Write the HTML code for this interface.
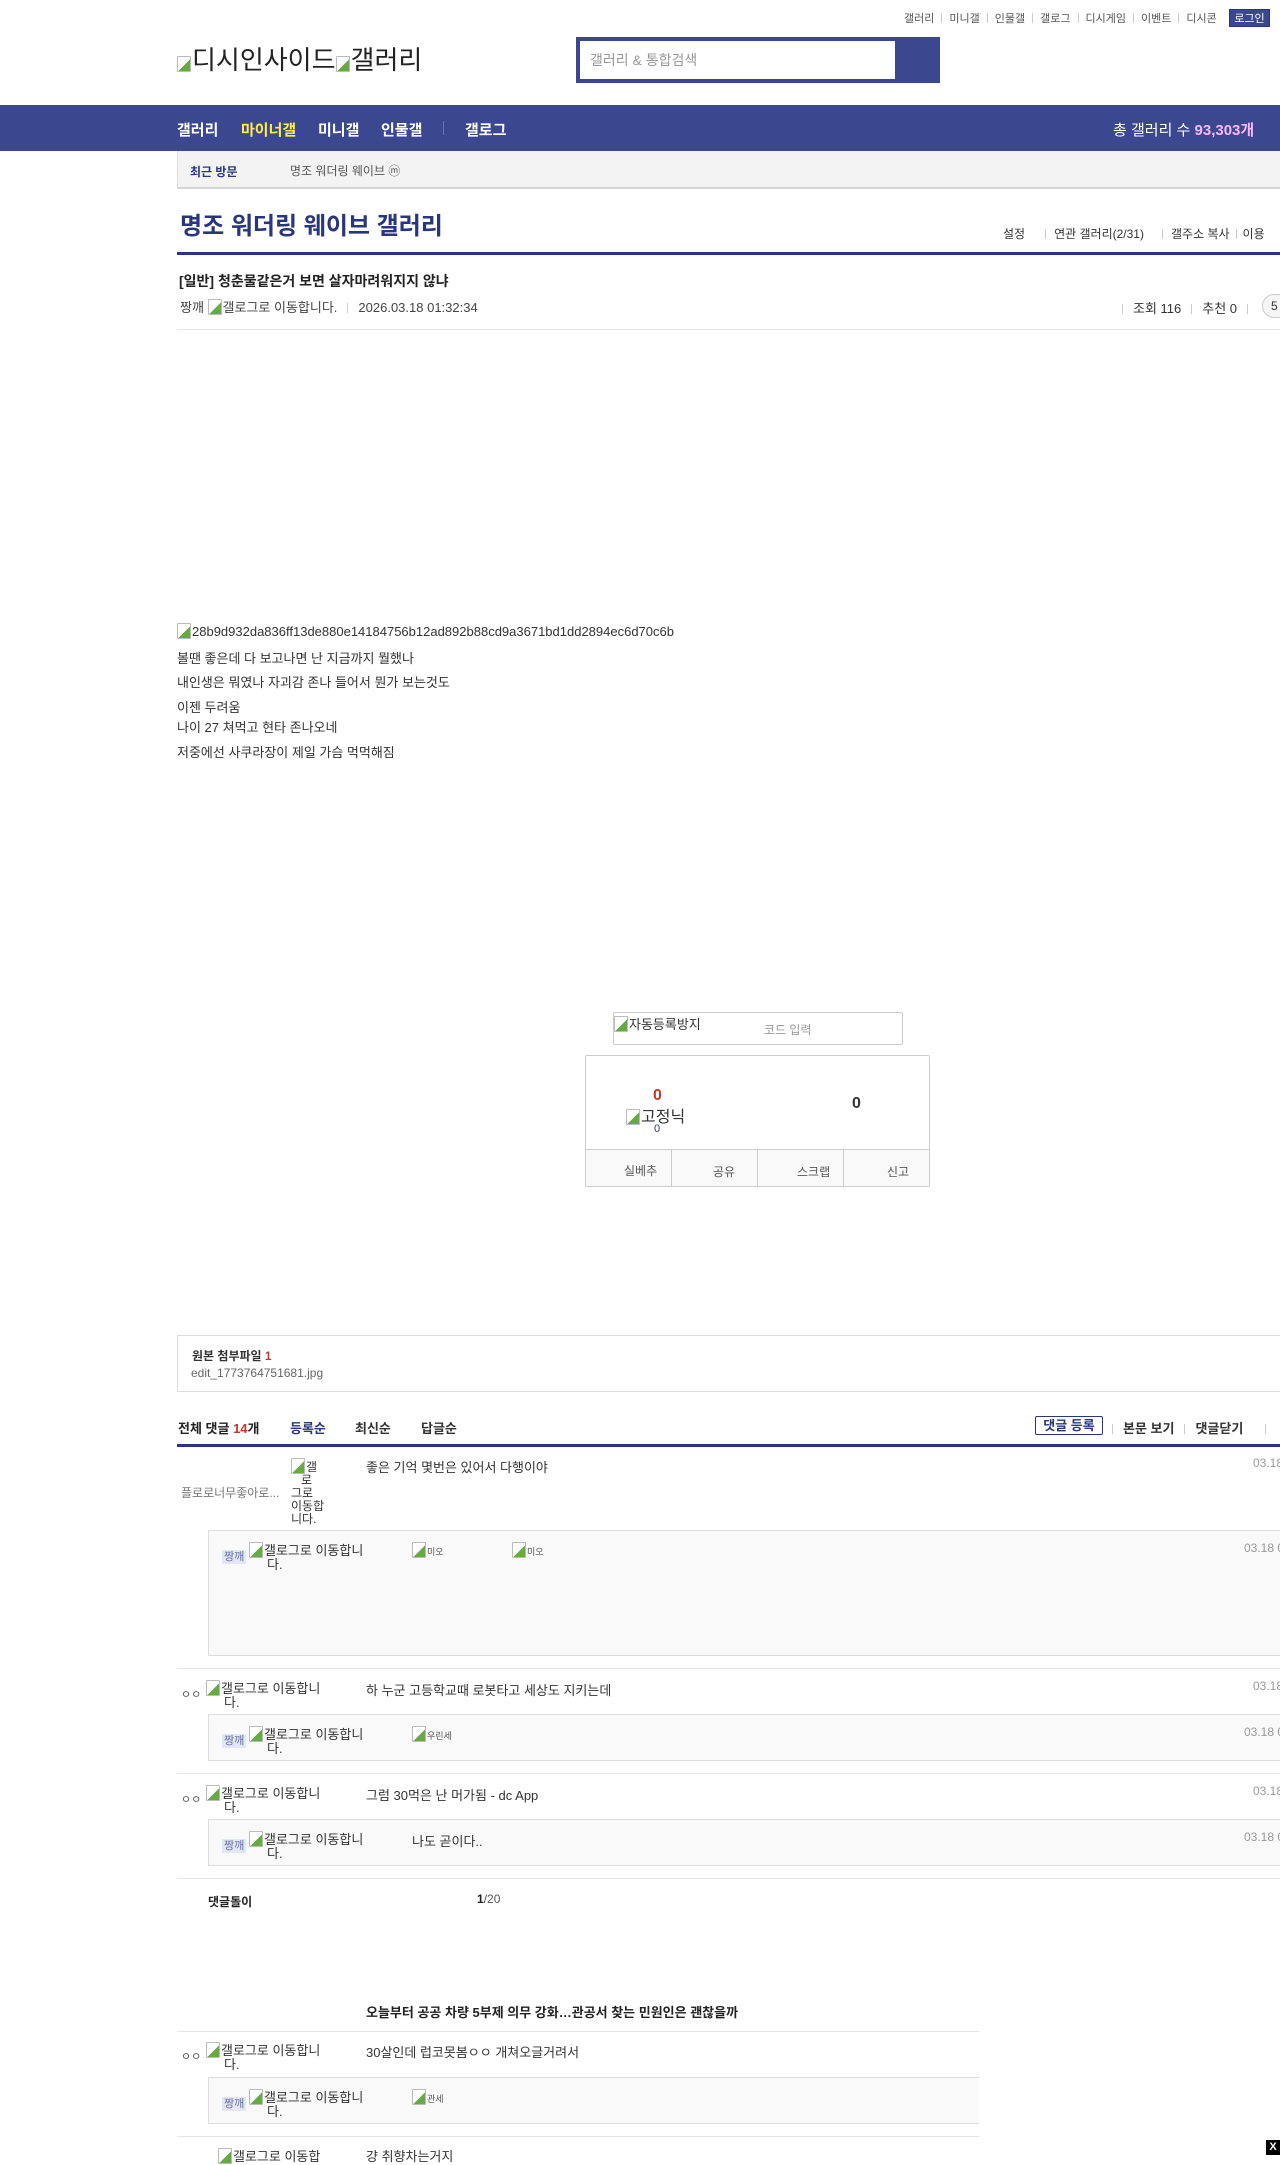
<!DOCTYPE html>
<html><head><meta charset="utf-8">
<style>
*{margin:0;padding:0;box-sizing:border-box}
body{width:1280px;height:2155px;overflow:hidden;position:relative;background:#fff;font-family:"Liberation Sans","Noto Sans CJK KR",sans-serif;color:#333;font-size:13px}
.a{position:absolute;white-space:nowrap}
.bi{display:inline-block;width:14px;height:16px;border:1px solid #bbb;border-radius:1px;vertical-align:-3px;background:linear-gradient(135deg,#fff 55%,#6a4 56%);margin-right:1px}
.navy{color:#29367c}
.top a{color:#555;font-size:11px;text-decoration:none}
.sep{display:inline-block;width:1px;height:10px;background:#ccc;margin:0 6px;vertical-align:-1px}
.top .sep{margin:0 7px}
.nav{font-size:15px;font-weight:bold;color:#fff}
.line{position:absolute;height:1px;background:#e5e5e5}
.rbox{position:absolute;left:208px;width:1072px;background:#f9f9f9;border:1px solid #ddd;border-right:none}
.tag{background:#e3e6f3;color:#6670a8;font-size:11px;padding:1px 2px}
.date{color:#999;font-size:12px}
</style></head><body>

<div class="a top" style="top:10px;left:904px"><a>갤러리</a><span class="sep"></span><a>미니갤</a><span class="sep"></span><a>인물갤</a><span class="sep"></span><a>갤로그</a><span class="sep"></span><a>디시게임</a><span class="sep"></span><a>이벤트</a><span class="sep"></span><a>디시콘</a></div>
<div class="a" style="top:9px;left:1229px;width:41px;height:18px;background:#3b4890;color:#fff;font-size:11px;text-align:center;line-height:18px;border:1px solid #29367c">로그인</div>

<div class="a" style="top:40px;left:177px;font-size:26px;color:#222"><span class="bi"></span>디시인사이드<span class="bi"></span>갤러리</div>
<div class="a" style="top:37px;left:576px;width:364px;height:46px;background:#3b4890;padding:4px">
  <div style="width:315px;height:38px;background:#fff;color:#999;font-size:14px;line-height:38px;padding-left:10px">갤러리 &amp; 통합검색</div>
</div>

<div class="a" style="top:105px;left:0;width:1280px;height:46px;background:#3b4890"></div>
<div class="a nav" style="top:119px;left:177px">갤러리</div>
<div class="a nav" style="top:119px;left:241px;color:#ffed4a">마이너갤</div>
<div class="a nav" style="top:119px;left:318px">미니갤</div>
<div class="a nav" style="top:119px;left:381px">인물갤</div>
<div class="a" style="top:121px;left:443px;width:1px;height:14px;background:#6a74b0"></div>
<div class="a nav" style="top:119px;left:465px">갤로그</div>
<div class="a" style="top:119px;left:1113px;color:#fff;font-size:15px">총 갤러리 수 <b style="color:#f8b8ff">93,303개</b></div>

<div class="a" style="top:151px;left:177px;width:1103px;height:38px;background:#f3f3f3;border-left:1px solid #ddd;border-bottom:2px solid #d5d5d5"></div>
<div class="a navy" style="top:163px;left:190px;font-size:12px;font-weight:bold">최근 방문</div>
<div class="a" style="top:162px;left:290px;font-size:12px;color:#555">명조 워더링 웨이브 ⓜ</div>

<div class="a navy" style="top:206px;left:180px;font-size:24px;font-weight:bold">명조 워더링 웨이브 갤러리</div>
<div class="a" style="top:225px;left:1003px;font-size:12px;color:#333">설정<span class="sep" style="margin:0 8px 0 20px"></span>연관 갤러리(2/31)<span class="sep" style="margin:0 8px 0 18px"></span>갤주소 복사<span class="sep"></span>이용</div>
<div class="a" style="top:252px;left:177px;width:1103px;height:3px;background:#29367c"></div>

<div class="a" style="top:271px;left:179px;font-size:14px;font-weight:bold;color:#222">[일반] 청춘물같은거 보면 살자마려워지지 않냐</div>
<div class="a" style="top:297px;left:180px;font-size:13px;color:#444">짱깨 <span class="bi"></span>갤로그로 이동합니다.<span class="sep" style="margin:0 10px"></span>2026.03.18 01:32:34</div>
<div class="a" style="top:298px;left:1122px;font-size:13px;color:#333"><span class="sep" style="margin:0 10px 0 0"></span>조회 116<span class="sep" style="margin:0 10px"></span>추천 0<span class="sep" style="margin:0 10px"></span></div>
<div class="a" style="top:294px;left:1262px;width:30px;height:24px;border:1px solid #ccc;border-radius:12px;background:#f5f5f5;font-size:12px;padding-left:8px;line-height:22px">5</div>
<div class="line" style="top:329px;left:177px;width:1103px"></div>

<div class="a" style="top:623px;left:177px;font-size:13px;color:#333"><span class="bi"></span>28b9d932da836ff13de880e14184756b12ad892b88cd9a3671bd1dd2894ec6d70c6b</div>
<div class="a" style="top:648px;left:177px">볼땐 좋은데 다 보고나면 난 지금까지 뭘했나</div>
<div class="a" style="top:672px;left:177px">내인생은 뭐였나 자괴감 존나 들어서 뭔가 보는것도</div>
<div class="a" style="top:697px;left:177px">이젠 두려움</div>
<div class="a" style="top:717px;left:177px">나이 27 쳐먹고 현타 존나오네</div>
<div class="a" style="top:742px;left:177px">저중에선 사쿠라장이 제일 가슴 먹먹해짐</div>

<div class="a" style="top:1012px;left:613px;width:290px;height:33px;border:1px solid #ccc;border-radius:2px"></div>
<div class="a" style="top:1014px;left:614px;font-size:13px;color:#333"><span class="bi"></span>자동등록방지</div>
<div class="a" style="top:1021px;left:764px;font-size:12px;color:#999">코드 입력</div>

<div class="a" style="top:1055px;left:585px;width:345px;height:132px;border:1px solid #ccc;border-radius:2px"></div>
<div class="a" style="top:1087px;left:653px;font-size:16px;font-weight:bold;color:#c0392b">0</div>
<div class="a" style="top:1103px;left:626px;font-size:16px;color:#333"><span class="bi"></span>고정닉</div>
<div class="a" style="top:1123px;left:654px;font-size:11px;color:#29367c">0</div>
<div class="a" style="top:1095px;left:852px;font-size:16px;font-weight:bold;color:#333">0</div>
<div class="a" style="top:1149px;left:586px;width:343px;height:37px;background:#f9f9f9;border-top:1px solid #ccc"></div>
<div class="a" style="top:1150px;left:671px;width:1px;height:36px;background:#ccc"></div>
<div class="a" style="top:1150px;left:757px;width:1px;height:36px;background:#ccc"></div>
<div class="a" style="top:1150px;left:843px;width:1px;height:36px;background:#ccc"></div>
<div class="a" style="top:1162px;left:624px;font-size:12px;color:#555">실베추</div>
<div class="a" style="top:1163px;left:713px;font-size:12px;color:#555">공유</div>
<div class="a" style="top:1163px;left:797px;font-size:12px;color:#555">스크랩</div>
<div class="a" style="top:1163px;left:887px;font-size:12px;color:#555">신고</div>

<div class="a" style="top:1335px;left:177px;width:1103px;height:57px;border:1px solid #ddd;border-right:none"></div>
<div class="a" style="top:1347px;left:192px;font-size:12px;font-weight:bold;color:#333">원본 첨부파일 <span style="color:#c0392b">1</span></div>
<div class="a" style="top:1366px;left:191px;font-size:12px;color:#666">edit_1773764751681.jpg</div>

<div class="a" style="top:1418px;left:178px;font-size:13px;font-weight:bold;color:#222">전체 댓글 <span style="color:#c0392b">14</span>개</div>
<div class="a navy" style="top:1418px;left:290px;font-size:13px;font-weight:bold">등록순</div>
<div class="a" style="top:1418px;left:355px;font-size:13px;font-weight:bold;color:#333">최신순</div>
<div class="a" style="top:1418px;left:421px;font-size:13px;font-weight:bold;color:#333">답글순</div>
<div class="a navy" style="top:1416px;left:1035px;width:68px;height:19px;border:1px solid #29367c;border-radius:2px;font-size:13px;font-weight:bold;text-align:center;line-height:17px">댓글 등록</div>
<div class="a" style="top:1418px;left:1112px;font-size:13px;font-weight:bold;color:#333"><span class="sep" style="margin:0 10px 0 0"></span>본문 보기<span class="sep" style="margin:0 10px"></span>댓글닫기<span class="sep" style="margin:0 0 0 22px"></span></div>
<div class="a" style="top:1444px;left:177px;width:1103px;height:3px;background:#29367c"></div>

<div class="a" style="top:1484px;left:181px;font-size:12px;color:#777">플로로너무좋아로...</div>
<div class="a" style="top:1458px;left:291px;width:42px;font-size:12px;line-height:13px;white-space:normal;color:#333"><span class="bi"></span>갤<br>&nbsp;&nbsp;&nbsp;로<br>그로<br>이동합<br>니다.</div>
<div class="a" style="top:1457px;left:366px;font-size:13px">좋은 기억 몇번은 있어서 다행이야</div>
<div class="a date" style="top:1456px;left:1253px">03.18</div>
<div class="rbox" style="top:1530px;height:126px"></div>
<div class="a" style="top:1548px;left:222px"><span class="tag">짱깨</span></div>
<div class="a" style="top:1542px;left:249px;font-size:13px;line-height:13px"><span class="bi"></span>갤로그로 이동합니<br>&nbsp;&nbsp;&nbsp;&nbsp;&nbsp;다.</div>
<div class="a" style="top:1542px;left:412px;font-size:9px;color:#555"><span class="bi"></span>미오</div>
<div class="a" style="top:1542px;left:512px;font-size:9px;color:#555"><span class="bi"></span>미오</div>
<div class="a date" style="top:1541px;left:1244px">03.18 0</div>
<div class="line" style="top:1668px;left:177px;width:1103px"></div>

<div class="a" style="top:1686px;left:181px;font-size:11px;color:#555">ㅇㅇ</div>
<div class="a" style="top:1680px;left:206px;font-size:13px;line-height:13px"><span class="bi"></span>갤로그로 이동합니<br>&nbsp;&nbsp;&nbsp;&nbsp;&nbsp;다.</div>
<div class="a" style="top:1680px;left:366px">하 누군 고등학교때 로봇타고 세상도 지키는데</div>
<div class="a date" style="top:1679px;left:1253px">03.18</div>
<div class="rbox" style="top:1714px;height:47px"></div>
<div class="a" style="top:1732px;left:222px"><span class="tag">짱깨</span></div>
<div class="a" style="top:1726px;left:249px;font-size:13px;line-height:13px"><span class="bi"></span>갤로그로 이동합니<br>&nbsp;&nbsp;&nbsp;&nbsp;&nbsp;다.</div>
<div class="a" style="top:1726px;left:412px;font-size:9px;color:#555"><span class="bi"></span>우린세</div>
<div class="a date" style="top:1725px;left:1244px">03.18 0</div>
<div class="line" style="top:1773px;left:177px;width:1103px"></div>

<div class="a" style="top:1791px;left:181px;font-size:11px;color:#555">ㅇㅇ</div>
<div class="a" style="top:1785px;left:206px;font-size:13px;line-height:13px"><span class="bi"></span>갤로그로 이동합니<br>&nbsp;&nbsp;&nbsp;&nbsp;&nbsp;다.</div>
<div class="a" style="top:1785px;left:366px">그럼 30먹은 난 머가됨 - dc App</div>
<div class="a date" style="top:1784px;left:1253px">03.18</div>
<div class="rbox" style="top:1819px;height:47px"></div>
<div class="a" style="top:1837px;left:222px"><span class="tag">짱깨</span></div>
<div class="a" style="top:1831px;left:249px;font-size:13px;line-height:13px"><span class="bi"></span>갤로그로 이동합니<br>&nbsp;&nbsp;&nbsp;&nbsp;&nbsp;다.</div>
<div class="a" style="top:1831px;left:412px">나도 곧이다..</div>
<div class="a date" style="top:1830px;left:1244px">03.18 0</div>
<div class="line" style="top:1878px;left:177px;width:1103px"></div>

<div class="a" style="top:1893px;left:208px;font-size:12px;font-weight:bold;color:#222">댓글돌이</div>
<div class="a" style="top:1892px;left:477px;font-size:12px;color:#555"><b style="color:#222">1</b>/20</div>

<div class="a" style="top:2002px;left:366px;font-size:13px;font-weight:bold;color:#222">오늘부터 공공 차량 5부제 의무 강화…관공서 찾는 민원인은 괜찮을까</div>
<div class="line" style="top:2031px;left:177px;width:802px"></div>
<div class="a" style="top:2048px;left:181px;font-size:11px;color:#555">ㅇㅇ</div>
<div class="a" style="top:2042px;left:206px;font-size:13px;line-height:13px"><span class="bi"></span>갤로그로 이동합니<br>&nbsp;&nbsp;&nbsp;&nbsp;&nbsp;다.</div>
<div class="a" style="top:2042px;left:366px">30살인데 럽코못봄ㅇㅇ 개쳐오글거려서</div>
<div class="a" style="top:2077px;left:208px;width:771px;height:47px;background:#f9f9f9;border:1px solid #ddd;border-right:none"></div>
<div class="a" style="top:2095px;left:222px"><span class="tag">짱깨</span></div>
<div class="a" style="top:2089px;left:249px;font-size:13px;line-height:13px"><span class="bi"></span>갤로그로 이동합니<br>&nbsp;&nbsp;&nbsp;&nbsp;&nbsp;다.</div>
<div class="a" style="top:2089px;left:412px;font-size:9px;color:#555"><span class="bi"></span>관세</div>
<div class="line" style="top:2136px;left:177px;width:802px"></div>
<div class="a" style="top:2146px;left:218px;font-size:13px"><span class="bi"></span>갤로그로 이동합</div>
<div class="a" style="top:2146px;left:366px">걍 취향차는거지</div>
<div class="a" style="top:2140px;left:1266px;width:14px;height:15px;background:#000;color:#fff;font-size:11px;font-weight:bold;text-align:center;line-height:15px">X</div>
</body></html>
